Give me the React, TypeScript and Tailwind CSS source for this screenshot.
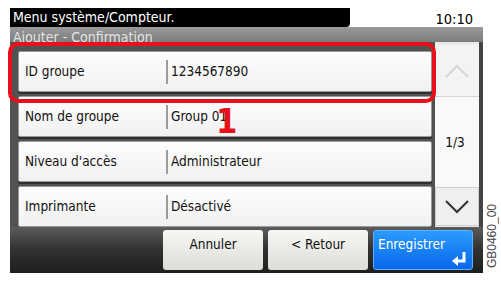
const FONT = "font-['DejaVu_Sans_Condensed','DejaVu_Sans',sans-serif]";

const ROWS = [
  { label: 'ID groupe', value: '1234567890' },
  { label: 'Nom de groupe', value: 'Group 01' },
  { label: "Niveau d'accès", value: 'Administrateur' },
  { label: 'Imprimante', value: 'Désactivé' },
];

function Chevron({ up, color }: { up?: boolean; color: string }) {
  return (
    <svg width="24" height="14" viewBox="0 0 24 14">
      <polyline
        points={up ? '1,13 12,2 23,13' : '1,1 12,12 23,1'}
        fill="none"
        stroke={color}
        strokeWidth="2"
      />
    </svg>
  );
}

function EnterIcon() {
  return (
    <svg width="16" height="15" viewBox="0 0 16 15">
      <path d="M13 1 V10 H6" fill="none" stroke="#fff" strokeWidth="3" />
      <polygon points="1,10 7,5 7,15" fill="#fff" />
    </svg>
  );
}

export default function App() {
  return (
    <div className={`relative flex h-[282px] w-[501px] overflow-hidden bg-white ${FONT}`}>
      {/* Panel screen */}
      <div className="ml-[10px] mt-[8px] flex h-[265px] w-[473px] flex-col">
        {/* Title row */}
        <div className="flex h-[19px]">
          <div className="w-[340px] rounded-br-[4px] bg-black pl-[3px] text-[14px] leading-[19px] text-white">
            Menu système/Compteur.
          </div>
          <div className="flex flex-1 justify-end pr-[10px] text-[14.5px] leading-[22px] text-black">
            10:10
          </div>
        </div>

        {/* Sub title */}
        <div className="h-[15px] overflow-hidden bg-gradient-to-b from-[#9a9a9a] to-[#7c7c7c] pl-[3px] text-[14px] leading-[21px] text-[#e4e4e4]">
          Ajouter - Confirmation
        </div>

        {/* List + scroll */}
        <div className="flex h-[185px]">
          <div className="flex w-[425px] flex-col gap-[4px] bg-[#525252] pl-[8px] pr-[3px] pt-[9px]">
            {ROWS.map((r) => (
              <div
                key={r.label}
                className="flex h-[41px] items-center rounded-[2px] border border-[#9a9a9a] bg-gradient-to-b from-[#fdfdfd] to-[#f1f1f1] text-[13.5px] text-[#111] shadow-[0_2px_0_#2e2e2e]"
              >
                <div className="w-[147px] pl-[6px]">{r.label}</div>
                <div className="h-[24px] w-[2px] bg-[#9c9c9c]" />
                <div className="pl-[3px]">{r.value}</div>
              </div>
            ))}
          </div>

          <div className="flex w-[44px] flex-col bg-[#e9e9e9]">
            <div className="mt-[3px] flex h-[52px] items-center justify-center border-b border-[#d4d4d4] bg-[#f3f3f3]">
              <Chevron up color="#d6d6d6" />
            </div>
            <div className="flex flex-1 items-center justify-center bg-[#f9f9f9] pr-[4px] text-[13.5px] text-[#111]">
              1/3
            </div>
            <div className="mb-[1px] flex h-[39px] items-center justify-center border border-[#cfcfcf] bg-[#efefef]">
              <Chevron color="#333" />
            </div>
          </div>
          <div className="w-[4px] bg-[#444]" />
        </div>

        {/* Bottom button bar */}
        <div className="flex h-[46px] items-start justify-end gap-[5px] bg-gradient-to-b from-[#5c5c5c] via-[#303130] to-[#1d1f1d] pr-[10px] pt-[3px]">
          <button className="flex h-[40px] w-[100px] justify-center rounded-[3px] bg-gradient-to-b from-[#f7f7f3] to-[#dcdcd8] pt-[5px] text-[13.5px] leading-[18px] text-[#111]">
            Annuler
          </button>
          <button className="flex h-[40px] w-[100px] justify-center rounded-[3px] bg-gradient-to-b from-[#f7f7f3] to-[#dcdcd8] pt-[5px] text-[13.5px] leading-[18px] text-[#111]">
            &lt; Retour
          </button>
          <button className="relative flex h-[40px] w-[100px] flex-col rounded-[3px] border border-[#5fb0ff] bg-gradient-to-b from-[#2b9bff] to-[#0a66e8] pl-[4px] pt-[4px] text-left text-[13.5px] leading-[18px] text-white">
            Enregistrer
            <span className="absolute bottom-[3px] right-[5px]">
              <EnterIcon />
            </span>
          </button>
        </div>
      </div>

      {/* Figure reference */}
      <div className="flex flex-1 items-end justify-center pb-[14px]">
        <span className="rotate-180 font-['Liberation_Sans',sans-serif] text-[12px] leading-none text-[#444] [writing-mode:vertical-rl]">
          GB0460_00
        </span>
      </div>

      {/* Highlight callout */}
      <div className="absolute left-[8px] top-[42px] h-[61px] w-[428px] rounded-[10px] border-[4px] border-[#e8101a]" />
      <div className="absolute left-[216px] top-[104px] text-[34px] font-bold leading-none text-[#e8101a]">
        1
      </div>
    </div>
  );
}
